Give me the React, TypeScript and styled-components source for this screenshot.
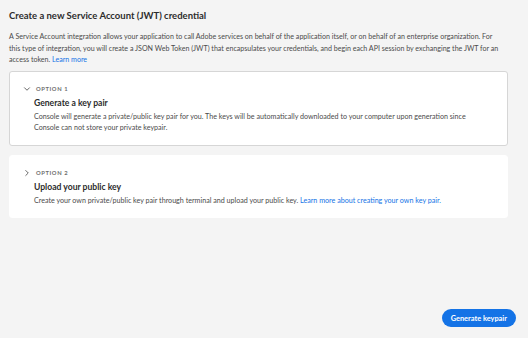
import styled, { createGlobalStyle } from 'styled-components'
import { ChevronDown, ChevronRight } from 'lucide-react'

const GlobalStyle = createGlobalStyle`
  html, body {
    margin: 0;
    padding: 0;
    background: #f4f4f4;
  }
  body {
    font-family: Lato, 'Open Sans', sans-serif;
    color: #4b4b4b;
  }
`

interface IOption {
  label: string
  title: string
  open: boolean
  text: React.ReactNode
}

const App = () => {
  const options: IOption[] = [
    {
      label: 'Option 1',
      title: 'Generate a key pair',
      open: true,
      text: (
        <>
          Console will generate a private/public key pair for you. The keys will be automatically
          downloaded to your computer upon generation since
          <br />
          Console can not store your private keypair.
        </>
      ),
    },
    {
      label: 'Option 2',
      title: 'Upload your public key',
      open: false,
      text: (
        <>
          Create your own private/public key pair through terminal and upload your public key.{' '}
          <Link href="#">Learn more about creating your own key pair.</Link>
        </>
      ),
    },
  ]

  return (
    <>
      <GlobalStyle />
      <Page>
        <Title>Create a new Service Account (JWT) credential</Title>
        <Intro>
          A Service Account integration allows your application to call Adobe services on behalf of
          the application itself, or on behalf of an enterprise organization. For
          <br />
          this type of integration, you will create a JSON Web Token (JWT) that encapsulates your
          credentials, and begin each API session by exchanging the JWT for an
          <br />
          access token. <Link href="#">Learn more</Link>
        </Intro>
        <Cards>
          {options.map((option) => (
            <Card key={option.label} $selected={option.open}>
              <CardHeader>
                <Chevron>
                  {option.open ? (
                    <ChevronDown size={10} strokeWidth={2} />
                  ) : (
                    <ChevronRight size={10} strokeWidth={2} />
                  )}
                </Chevron>
                <OptionLabel>{option.label}</OptionLabel>
              </CardHeader>
              <CardBody>
                <CardTitle>{option.title}</CardTitle>
                <CardText>{option.text}</CardText>
              </CardBody>
            </Card>
          ))}
        </Cards>
        <Footer>
          <PrimaryButton>Generate keypair</PrimaryButton>
        </Footer>
      </Page>
    </>
  )
}

export default App

const Page = styled.div`
  display: flex;
  flex-direction: column;
  min-height: 338px;
  box-sizing: border-box;
  padding: 9px 20px 11px 9px;
`

const Title = styled.h1`
  margin: 0;
  font-size: 9.5px;
  line-height: 14px;
  font-weight: 700;
  color: #2c2c2c;
`

const Intro = styled.p`
  margin: 8px -14px 0 0;
  font-size: 7.1px;
  line-height: 11.6px;
  white-space: nowrap;
  color: #4b4b4b;
`

const Link = styled.a`
  color: #1473e6;
  text-decoration: none;
`

const Cards = styled.div`
  display: flex;
  flex-direction: column;
  gap: 9px;
  margin-top: 5px;
`

const Card = styled.div<{ $selected: boolean }>`
  background: #fff;
  border: 1px solid ${({ $selected }) => ($selected ? '#d6d6d6' : '#fff')};
  border-radius: 3px;
  padding: 11px 14px 11px 12px;
`

const CardHeader = styled.div`
  display: flex;
  align-items: center;
  gap: 4px;
  height: 12px;
`

const Chevron = styled.span`
  display: flex;
  color: #4b4b4b;
`

const OptionLabel = styled.span`
  font-size: 5.8px;
  font-weight: 700;
  letter-spacing: 0.6px;
  text-transform: uppercase;
  color: #6e6e6e;
`

const CardBody = styled.div`
  padding-left: 12px;
`

const CardTitle = styled.div`
  margin-top: 2px;
  font-size: 8.6px;
  line-height: 12px;
  font-weight: 700;
  color: #2c2c2c;
`

const CardText = styled.div`
  margin-top: 2px;
  font-size: 7.15px;
  line-height: 11.4px;
  color: #4b4b4b;
`

const Footer = styled.div`
  display: flex;
  justify-content: flex-end;
  margin-top: auto;
  margin-right: -8px;
`

const PrimaryButton = styled.button`
  height: 18px;
  padding: 0 9px;
  border: none;
  border-radius: 9px;
  background: #1473e6;
  color: #fff;
  font-family: inherit;
  font-size: 7.4px;
  font-weight: 700;
  cursor: pointer;
`
